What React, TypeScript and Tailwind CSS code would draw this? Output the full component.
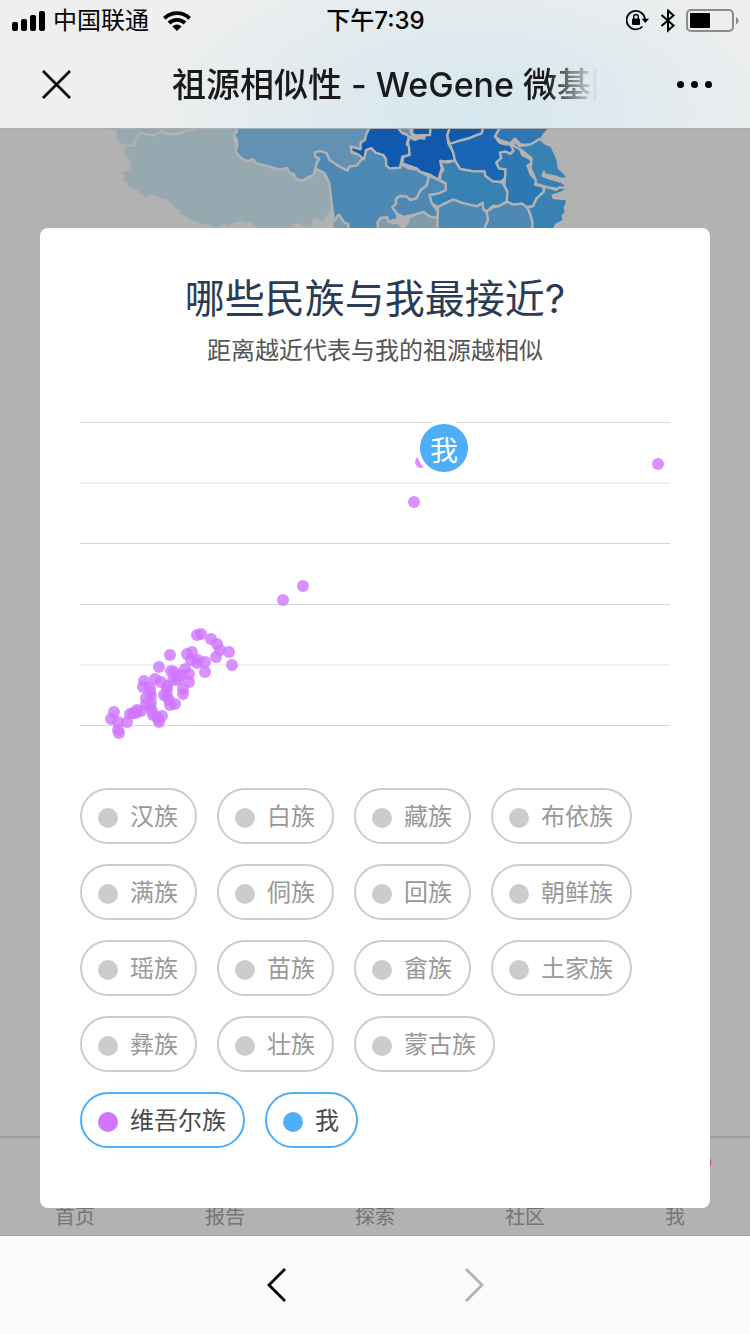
import { useState } from 'react';

type Group = { name: string; color: string };

const GROUPS: Group[] = [
  { name: '汉族', color: '#f5a623' },
  { name: '白族', color: '#7ed321' },
  { name: '藏族', color: '#50e3c2' },
  { name: '布依族', color: '#b8e986' },
  { name: '满族', color: '#f8e71c' },
  { name: '侗族', color: '#8b572a' },
  { name: '回族', color: '#417505' },
  { name: '朝鲜族', color: '#bd10e0' },
  { name: '瑶族', color: '#9013fe' },
  { name: '苗族', color: '#4a90e2' },
  { name: '畲族', color: '#d0021b' },
  { name: '土家族', color: '#ff8a65' },
  { name: '彝族', color: '#26a69a' },
  { name: '壮族', color: '#ec407a' },
  { name: '蒙古族', color: '#5c6bc0' },
  { name: '维吾尔族', color: '#d075ff' },
  { name: '我', color: '#4eaef8' },
];

const TABS = ['首页', '报告', '探索', '社区', '我'];

const GRID_LINES = [
  { y: 12, strong: true },
  { y: 73, strong: false },
  { y: 133, strong: true },
  { y: 194, strong: true },
  { y: 255, strong: false },
  { y: 315, strong: true },
];

const POINTS: [number, number][] = [
  [578, 54], [341, 52], [334, 92], [223, 176], [203, 190],
  [117, 225], [121, 224], [131, 229], [137, 234], [140, 240], [149, 242], [136, 247], [152, 255],
  [90, 245], [79, 257], [107, 244], [112, 242], [111, 250], [117, 253], [118, 250], [125, 252],
  [125, 262], [105, 259], [109, 264], [109, 272], [91, 261], [94, 262], [97, 267], [93, 270],
  [98, 270], [101, 265], [75, 269], [81, 272], [64, 271], [63, 277], [70, 278], [87, 276],
  [87, 280], [66, 288], [71, 286], [70, 282], [84, 285], [87, 286], [103, 279], [103, 284],
  [89, 290], [90, 295], [95, 294], [66, 294], [71, 293], [70, 297], [72, 301], [73, 305],
  [78, 309], [79, 312], [82, 306], [77, 307], [57, 300], [61, 301], [53, 303], [56, 303],
  [50, 304], [34, 302], [31, 309], [38, 312], [47, 312], [38, 320], [39, 323],
];

const PROVINCES = [
  { fill: '#97a9b0', d: 'M31,20 48,30 77,34 77,55 82,68 100,78 101,92 99,110 112,116 121,128 117,145 106,153 88,147 100,170 97,186 109,192 115,204 132,212 143,215 152,225 172,238 180,229 200,230 212,239 225,240 240,253 247,257 249,270 265,273 270,287 293,296 298,303 318,307 330,315 350,317 368,325 384,325 408,317 415,327 428,313 452,306 465,311 480,311 500,327 605,327 612,317 628,313 640,323 665,325 672,301 684,299 700,313 712,293 720,278 727,265 718,190 700,155 676,148 672,165 638,182 617,177 592,144 570,149 520,135 487,117 470,123 440,95 433,45 440,20Z' },
  { fill: '#6391b3', d: 'M440,20 441,35 432,45 440,58 442,80 436,93 450,110 462,120 475,123 487,117 500,130 520,135 545,142 570,149 592,144 598,157 612,162 617,176 638,182 654,171 670,166 676,147 680,130 688,116 676,110 675,97 690,93 710,100 718,120 745,138 772,152 778,140 800,137 812,122 822,118 806,104 785,98 782,80 812,88 812,68 825,60 830,40 841,20Z' },
  { fill: '#4d89b4', d: 'M675,97 690,93 710,100 718,120 745,138 772,152 778,140 800,137 812,122 825,105 830,90 844,84 857,98 880,105 888,117 889,137 900,145 930,143 935,133 955,145 980,149 1018,170 1008,199 992,210 980,235 960,240 950,230 930,228 918,237 918,252 907,262 920,280 925,298 910,300 895,305 892,292 872,294 865,305 865,328 735,328 727,265 718,190 704,160 684,149 677,144 680,130 688,116 676,110Z' },
  { fill: '#7f9cac', d: 'M727,328 727,300 737,300 741,288 748,284 756,298 764,308 775,312 775,328Z' },
  { fill: '#7f9cac', d: 'M865,328 862,308 872,294 892,292 895,305 910,310 925,308 940,328Z' },
  { fill: '#1159ac', d: 'M841,20 830,40 825,60 812,68 812,88 782,80 785,95 806,104 822,118 828,90 844,84 857,98 880,105 888,117 889,137 900,145 930,143 937,110 959,105 957,80 950,72 958,48 938,40 922,20Z' },
  { fill: '#6391b3', d: 'M922,20 935,38 952,44 958,55 967,48 961,30 970,20Z' },
  { fill: '#1159ac', d: 'M970,20 965,38 975,46 1020,45 1022,20Z' },
  { fill: '#1159ac', d: 'M958,52 975,60 990,54 1003,56 1004,46 1020,45 1022,20 1080,20 1072,45 1075,70 1090,98 1095,122 1051,125 1055,145 1045,179 1018,163 990,155 980,145 960,138 937,130 940,111 959,105 957,80 954,70Z' },
  { fill: '#1159ac', d: 'M1080,20 1072,48 1079,72 1110,62 1140,54 1158,46 1175,40 1180,20Z' },
  { fill: '#1a66b4', d: 'M1079,72 1110,62 1140,54 1158,46 1175,40 1180,20 1232,20 1215,49 1228,68 1246,73 1264,74 1271,88 1261,102 1246,95 1230,98 1234,114 1219,128 1227,145 1247,148 1245,175 1230,186 1208,184 1186,168 1183,154 1150,154 1110,147 1095,122 1090,98Z' },
  { fill: '#2f76b3', d: 'M1232,20 1215,49 1230,60 1260,70 1275,56 1292,74 1322,73 1340,68 1355,55 1364,40 1384,20Z' },
  { fill: '#3782b3', d: 'M1272,64 1290,78 1320,74 1350,56 1366,71 1384,78 1396,103 1404,123 1406,144 1424,160 1434,176 1410,176 1398,170 1362,163 1362,155 1358,168 1380,176 1415,186 1432,200 1405,207 1372,202 1335,190 1333,170 1322,145 1325,115 1294,90 1270,80Z' },
  { fill: '#2d78b2', d: 'M1260,72 1290,88 1297,105 1321,118 1324,130 1312,137 1323,165 1338,180 1335,194 1360,200 1361,216 1340,235 1330,258 1310,261 1296,251 1270,254 1250,245 1252,215 1243,200 1247,148 1227,145 1219,128 1234,114 1230,98 1246,95 1261,102 1271,92Z' },
  { fill: '#3782b3', d: 'M1051,122 1070,128 1095,122 1110,147 1150,154 1183,154 1186,168 1208,184 1237,187 1252,215 1250,245 1228,258 1208,258 1190,274 1178,265 1178,248 1161,259 1120,250 1090,239 1065,250 1044,262 1025,250 1018,225 1045,220 1068,210 1066,190 1050,180 1052,160 1060,150Z' },
  { fill: '#4d89b4', d: 'M1018,167 1045,180 1066,190 1068,210 1045,220 1018,225 1025,250 1044,275 1042,300 1020,290 1000,276 972,284 940,291 920,280 907,262 918,252 918,237 930,228 950,230 960,240 980,235 992,210 1010,197Z' },
  { fill: '#7f9cac', d: 'M940,328 954,304 958,292 980,282 1000,276 1020,290 1042,294 1042,328Z' },
  { fill: '#4d89b4', d: 'M1044,262 1065,250 1090,239 1120,250 1161,259 1178,250 1180,268 1192,280 1194,300 1182,328 1042,328Z' },
  { fill: '#4d89b4', d: 'M1190,275 1208,262 1228,258 1250,245 1270,254 1296,251 1313,264 1322,285 1328,310 1325,328 1182,328 1194,300Z' },
  { fill: '#3782b3', d: 'M1365,200 1398,210 1410,202 1434,205 1414,218 1388,226 1390,234 1431,237 1430,252 1424,262 1428,277 1418,288 1422,302 1399,313 1391,328 1325,328 1328,310 1322,285 1313,264 1330,258 1340,235 1361,216Z' },
];

function StatusBar() {
  return (
    <div className="flex h-[41px] items-center pr-[11px] pl-3 text-2xl text-black">
      <div className="flex flex-1 items-center gap-2">
        <svg className="h-5 w-[33px]" viewBox="0 0 33 20">
          <rect x="0" y="11" width="6" height="9" rx="2" />
          <rect x="9" y="8" width="6" height="12" rx="2" />
          <rect x="18" y="4" width="6" height="16" rx="2" />
          <rect x="27" y="0" width="6" height="20" rx="2" />
        </svg>
        <span>中国联通</span>
        <svg className="ml-1.5 h-5 w-7" viewBox="0 0 28 20" fill="none" stroke="#000" strokeWidth="3.8">
          <path d="M1.4 7.3a18 18 0 0 1 25.2 0" />
          <path d="M6 12a11.6 11.6 0 0 1 16 0" />
          <path d="M14 20l-4.6-4.6a6.6 6.6 0 0 1 9.2 0z" fill="#000" stroke="none" />
        </svg>
      </div>
      <span className="font-medium">下午7:39</span>
      <div className="flex flex-1 items-center justify-end gap-2.5">
        <svg className="h-6 w-6" viewBox="0 0 24 24" fill="none" stroke="#000" strokeWidth="1.8">
          <path d="M16.500 17.500A9.200 9.200 0 1 1 19 10.500" />
          <path d="M15.600 9.800h7.400l-3.700 4.200z" fill="#000" stroke="none" />
          <rect x="6" y="9.500" width="8" height="6.500" rx="1" fill="#000" stroke="none" />
          <path d="M7.700 10V7.800a2.300 2.300 0 0 1 4.600 0V10" strokeWidth="1.4" />
        </svg>
        <svg className="h-6 w-4" viewBox="0 0 16 24" fill="none" stroke="#000" strokeWidth="2">
          <path d="M1.500 6l12 10.500L8 21.500V1.500l5.500 5-12 10.500" />
        </svg>
        <svg className="h-6 w-[53px]" viewBox="0 0 53 24">
          <rect x="1" y="1" width="46" height="21" rx="4" fill="none" stroke="#8c8c8c" strokeWidth="2" />
          <rect x="4" y="4" width="20" height="15" rx="1" />
          <path d="M50 8q2.600 1 2.600 3.700t-2.600 3.700z" fill="#8c8c8c" />
        </svg>
      </div>
    </div>
  );
}

function Header() {
  return (
    <header className="border-b border-[#a9adb0] bg-[radial-gradient(ellipse_340px_170px_at_470px_110px,#d5e7ef,#e4ebee_60%,#efefef)]">
      <StatusBar />
      <div className="flex h-[87px] items-center">
        <div className="w-[172px] pl-10">
          <button type="button" aria-label="关闭" className="block">
            <svg className="h-8 w-8" viewBox="0 0 32 32" fill="none" stroke="#000" strokeWidth="2.6">
              <path d="M3 2L30 29M30 2L3 29" />
            </svg>
          </button>
        </div>
        <h1 className="flex-1 overflow-hidden text-[34px] font-medium whitespace-nowrap text-[#1a1a1a] [mask-image:linear-gradient(to_right,#000_88%,transparent)]">
          祖源相似性 - WeGene 微基因
        </h1>
        <div className="flex w-[152px] justify-end pr-9">
          <button type="button" aria-label="更多" className="flex gap-[7px] p-0.5">
            <span className="size-[7px] rounded-full bg-black" />
            <span className="size-[7px] rounded-full bg-black" />
            <span className="size-[7px] rounded-full bg-black" />
          </button>
        </div>
      </div>
    </header>
  );
}

function MapBackdrop() {
  return (
    <svg className="block w-full" viewBox="-270 27 2250 297" stroke="#b2b2b2" strokeWidth="7" strokeLinejoin="round">
      {PROVINCES.map((p, i) => (
        <path key={i} d={p.d} fill={p.fill} />
      ))}
      <path d="M100,77 133,77 137,60 150,38 170,44 195,46 215,31 230,42 265,42 290,32 325,24" fill="none" />
    </svg>
  );
}

function TabBar() {
  return (
    <nav className="flex h-[99px] border-t-2 border-[#9d9d9f]">
      {TABS.map((tab) => (
        <a key={tab} href="#" className="relative flex flex-1 items-end justify-center pb-1 text-xl text-[#757575]">
          {tab}
          {tab === '我' && (
            <span className="absolute top-3.5 left-1/2 ml-4 size-5 rounded-full bg-[#c23a3a]" />
          )}
        </a>
      ))}
    </nav>
  );
}

function SimilarityChart({ showPoints, showMe }: { showPoints: boolean; showMe: boolean }) {
  return (
    <svg className="block w-full" viewBox="0 0 590 330">
      {GRID_LINES.map((line) => (
        <rect
          key={line.y}
          x="0"
          y={line.strong ? line.y : line.y - 1}
          width="590"
          height={line.strong ? 1 : 2}
          fill={line.strong ? '#d6d6d6' : '#f1f1f1'}
        />
      ))}
      {showPoints &&
        POINTS.map(([x, y], i) => (
          <circle key={i} cx={x} cy={y} r="6" fill="#d075ff" fillOpacity="0.8" />
        ))}
      {showMe && (
        <>
          <circle cx="364" cy="38" r="28" fill="#fff" />
          <circle cx="364" cy="38" r="24" fill="#4eaef8" />
          <text x="364" y="51" textAnchor="middle" fontSize="28" fill="#fff">
            我
          </text>
        </>
      )}
    </svg>
  );
}

export default function App() {
  const [selected, setSelected] = useState<string[]>(['维吾尔族', '我']);

  const toggle = (name: string) => {
    setSelected(
      selected.includes(name) ? selected.filter((n) => n !== name) : [...selected, name]
    );
  };

  return (
    <div className="flex min-h-screen flex-col bg-[#b2b2b2] font-['Inter','Noto_Sans_CJK_SC',sans-serif]">
      <Header />

      <main className="grid flex-1">
        <div className="col-start-1 row-start-1 flex flex-col justify-between">
          <MapBackdrop />
          <TabBar />
        </div>

        <div className="z-10 col-start-1 row-start-1 px-10 pt-[99px] pb-[27px]">
          <section className="rounded-lg bg-white px-10 pt-10 pb-15">
            <h2 className="text-center text-[40px] leading-[62px] text-[#2a3b53]">
              哪些民族与我最接近?
            </h2>
            <p className="mt-1 text-center text-2xl leading-[34px] text-[#555]">
              距离越近代表与我的祖源越相似
            </p>

            <div className="mt-[42px]">
              <SimilarityChart
                showPoints={selected.includes('维吾尔族')}
                showMe={selected.includes('我')}
              />
            </div>

            <div className="mt-12 flex flex-wrap gap-5">
              {GROUPS.map((group) => {
                const active = selected.includes(group.name);
                return (
                  <button
                    key={group.name}
                    type="button"
                    aria-pressed={active}
                    onClick={() => toggle(group.name)}
                    className={`flex h-14 items-center gap-3 rounded-full border-2 pt-0.5 pr-[17px] pl-4 text-2xl ${
                      active ? 'border-[#4eaef8] text-[#4a4a4a]' : 'border-[#ccc] text-[#999]'
                    }`}
                  >
                    <span
                      className="mt-0.5 size-5 rounded-full"
                      style={{ backgroundColor: active ? group.color : '#ccc' }}
                    />
                    {group.name}
                  </button>
                );
              })}
            </div>
          </section>
        </div>
      </main>

      <footer className="flex h-[99px] items-center justify-center gap-40 border-t border-[#a0a0a2] bg-[#fafafc]">
        <button type="button" aria-label="后退">
          <svg className="h-9 w-9" viewBox="0 0 36 36" fill="none" stroke="#000" strokeWidth="2.8">
            <path d="M26 2L10 18l16 16" />
          </svg>
        </button>
        <button type="button" aria-label="前进">
          <svg className="h-9 w-9" viewBox="0 0 36 36" fill="none" stroke="#b2b2b2" strokeWidth="2.8">
            <path d="M11 2l16 16-16 16" />
          </svg>
        </button>
      </footer>
    </div>
  );
}
